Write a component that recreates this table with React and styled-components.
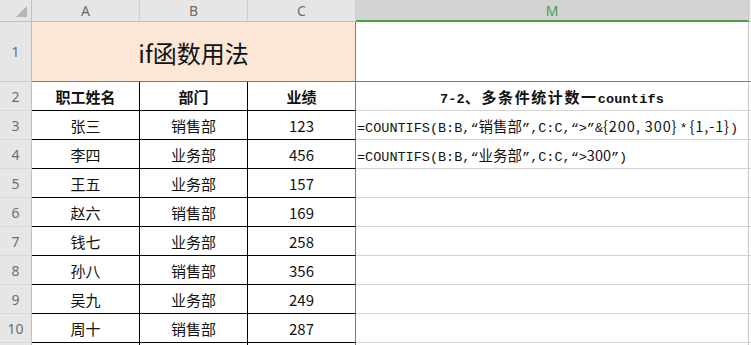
import React from "react";
import styled, { createGlobalStyle, css } from "styled-components";

const GREEN = "#4a9f45";
const GRID = "#d4d4d4";
const HEAD_BG = "#e6e6e6";

const Global = createGlobalStyle`
  html, body { margin: 0; padding: 0; background: #fff; overflow: hidden; }
  * { box-sizing: border-box; }
`;

const Sheet = styled.div`
  display: grid;
  grid-template-columns: 32px 108px 108px 108px 393px 1fr;
  grid-template-rows: 22px 60px repeat(10, 29px) 20px;
  width: 751px;
  height: 345px;
  overflow: hidden;
  font-family: "Noto Sans CJK SC", "Noto Sans", sans-serif;
`;

const Corner = styled.div`
  background: ${HEAD_BG};
  border-right: 1px solid #bfbfbf;
  border-bottom: 1px solid #bfbfbf;
  display: flex;
  align-items: flex-end;
  justify-content: flex-end;
  padding: 0 4px 4px 0;
`;

const ColHead = styled.div`
  display: flex;
  align-items: center;
  justify-content: center;
  font-family: "Noto Sans", sans-serif;
  font-size: 14px;
  color: #6b6b6b;
  background: ${HEAD_BG};
  border-right: 1px solid #cfcfcf;
  border-bottom: 1px solid #bfbfbf;
  ${(p) =>
    p.$selected &&
    css`
      background: #d3d3d3;
      color: ${GREEN};
      border-right: 1px solid #c4c4c4;
      border-bottom: 2px solid ${GREEN};
      padding-top: 1px;
    `}
`;

const RowHead = styled.div`
  display: flex;
  align-items: center;
  justify-content: center;
  font-family: "Noto Sans", sans-serif;
  font-size: 14px;
  color: #6e6e6e;
  background: ${HEAD_BG};
  border-right: 1px solid #bfbfbf;
  border-bottom: 1px solid ${(p) => (p.$green ? "#c9c9c9" : "#d6d6d6")};
`;

const TitleCell = styled.div`
  grid-column: span 3;
  display: flex;
  align-items: center;
  justify-content: center;
  background: #fce6d6;
  font-size: 24px;
  color: #111;
  border-right: 1px solid ${GREEN};
  border-bottom: 1px solid ${GREEN};
  padding-top: 1px;
`;

const Cell = styled.div`
  display: flex;
  align-items: center;
  justify-content: center;
  font-size: 15px;
  color: #111;
  font-weight: ${(p) => (p.$bold ? 700 : 400)};
  border-right: 1px solid ${(p) => (p.$last ? GREEN : "#000")};
  border-bottom: 1px solid ${(p) => (p.$open ? "#fff" : "#000")};
`;

const MCell = styled.div`
  display: flex;
  align-items: ${(p) => (p.$center ? "center" : "flex-end")};
  justify-content: ${(p) => (p.$center ? "center" : "flex-start")};
  padding: ${(p) => (p.$center ? "1px 0 0 0" : "0 0 3px 1px")};
  border-right: 1px solid #c8c8c8;
  border-bottom: 1px solid ${(p) => (p.$green ? GREEN : GRID)};
  white-space: nowrap;
  overflow: hidden;
  color: #111;
`;

const EdgeCell = styled.div`
  border-bottom: 1px solid ${(p) => (p.$green ? GREEN : GRID)};
  background: #fff;
`;

const EdgeHead = styled.div`
  background: ${HEAD_BG};
  border-bottom: 1px solid #bfbfbf;
`;

const Heading = styled.span`
  font-family: "Liberation Mono", "Noto Sans CJK SC", monospace;
  font-weight: 700;
  font-size: 13.5px;
  letter-spacing: 0.2px;
`;

const Han = styled.span`
  font-family: "Noto Sans CJK SC", sans-serif;
  font-size: ${(p) => p.$size || 14.5}px;
  letter-spacing: ${(p) => p.$spacing || 0}px;
`;

const Formula = styled.span`
  font-family: "Liberation Mono", "Noto Sans CJK SC", monospace;
  font-size: 13.5px;
`;

const Num = styled.span`
  font-family: "Noto Sans CJK SC", sans-serif;
  font-size: 14.5px;
  letter-spacing: ${(p) => p.$spacing || 0}px;
`;

const Star = styled.span`
  padding: 0 2px;
`;

const rows = [
  ["张三", "销售部", "123"],
  ["李四", "业务部", "456"],
  ["王五", "业务部", "157"],
  ["赵六", "销售部", "169"],
  ["钱七", "业务部", "258"],
  ["孙八", "销售部", "356"],
  ["吴九", "业务部", "249"],
  ["周十", "销售部", "287"],
];

function CornerMark() {
  return (
    <svg width="11" height="11" viewBox="0 0 11 11">
      <polygon points="11,0 11,11 0,11" fill="#b5b5b5" />
    </svg>
  );
}

function mCellContent(i) {
  if (i === 0)
    return (
      <Formula>
        =COUNTIFS(B:B,“<Han>销售部</Han>”,C:C,“&gt;”&amp;
        <Num $spacing={0.9}>{"{200, 300}"}</Num>
        <Star>*</Star>
        <Num $spacing={0.9}>{"{1,-1}"}</Num>)
      </Formula>
    );
  if (i === 1)
    return (
      <Formula>
        =COUNTIFS(B:B,“<Han>业务部</Han>”,C:C,“&gt;<Num>300</Num>”)
      </Formula>
    );
  return null;
}

export default function App() {
  return (
    <>
      <Global />
      <Sheet>
        <Corner>
          <CornerMark />
        </Corner>
        <ColHead>A</ColHead>
        <ColHead>B</ColHead>
        <ColHead>C</ColHead>
        <ColHead $selected>M</ColHead>
        <EdgeHead />

        <RowHead $green>1</RowHead>
        <TitleCell>if函数用法</TitleCell>
        <MCell $green />
        <EdgeCell $green />

        <RowHead>2</RowHead>
        <Cell $bold>职工姓名</Cell>
        <Cell $bold>部门</Cell>
        <Cell $bold $last>业绩</Cell>
        <MCell $center>
          <Heading>
            7-2<Han $size={15} $spacing={1.6}>、多条件统计数一</Han>countifs
          </Heading>
        </MCell>
        <EdgeCell />

        {rows.map((r, i) => (
          <React.Fragment key={i}>
            <RowHead>{i + 3}</RowHead>
            <Cell>{r[0]}</Cell>
            <Cell>{r[1]}</Cell>
            <Cell $last>{r[2]}</Cell>
            <MCell>{mCellContent(i)}</MCell>
            <EdgeCell />
          </React.Fragment>
        ))}

        <RowHead />
        <Cell $open />
        <Cell $open />
        <Cell $open $last />
        <MCell />
        <EdgeCell />
      </Sheet>
    </>
  );
}
